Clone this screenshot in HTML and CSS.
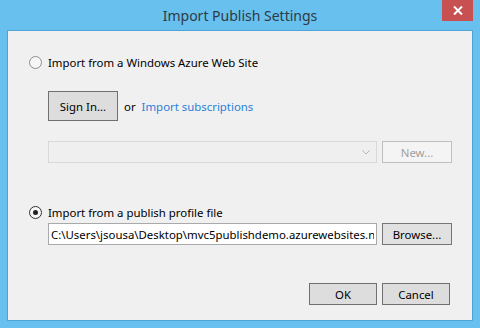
FILE: index.html
```html
<!DOCTYPE html>
<html lang="en">
<head>
  <meta charset="UTF-8">
  <title>Import Publish Settings</title>
  <link rel="stylesheet" href="styles.css">
</head>
<body>
  <div class="window">
    <div class="titlebar">
      <span></span>
      <h1 class="title">Import Publish Settings</h1>
      <button class="close-btn" aria-label="Close">
        <svg width="10" height="9" viewBox="0 0 10 9">
          <path d="M1 0.5 L9 8.5 M9 0.5 L1 8.5" stroke="#fff" stroke-width="2"/>
        </svg>
      </button>
    </div>

    <div class="client">
      <label class="option">
        <span class="radio"></span>
        <span>Import from a Windows Azure Web Site</span>
      </label>

      <div class="indent signin-row">
        <button class="btn btn-signin">Sign In...</button>
        <span class="or">or</span>
        <a href="#" class="link">Import subscriptions</a>
      </div>

      <div class="indent field-row select-row">
        <div class="combo disabled">
          <svg class="chevron" width="8" height="5" viewBox="0 0 8 5">
            <path d="M0.5 0.5 L4 4 L7.5 0.5" fill="none" stroke="#b5b5b5" stroke-width="1"/>
          </svg>
        </div>
        <button class="btn btn-disabled">New...</button>
      </div>

      <label class="option option-file">
        <span class="radio checked"></span>
        <span>Import from a publish profile file</span>
      </label>

      <div class="indent field-row file-row">
        <input class="textbox" type="text" value="C:\Users\jsousa\Desktop\mvc5publishdemo.azurewebsites.net.PublishSettings">
        <button class="btn btn-light">Browse...</button>
      </div>

      <div class="footer">
        <button class="btn btn-dialog">OK</button>
        <button class="btn btn-dialog">Cancel</button>
      </div>
    </div>
  </div>
</body>
</html>
```

FILE: styles.css
```css
/* Global */
body {
  margin: 0;
  font-family: "Noto Sans", "Open Sans", sans-serif;
  font-size: 11.4px;
  color: #000;
}

.window {
  width: 480px;
  height: 328px;
  background-color: #68c0ef;
  display: flex;
  flex-direction: column;
}

/* Title bar */
.titlebar {
  height: 30px;
  display: grid;
  grid-template-columns: 1fr auto 1fr;
  align-items: start;
}

.title {
  margin: 0;
  font-size: 14px;
  font-weight: normal;
  color: #2f3b44;
  line-height: 31px;
}

.close-btn {
  justify-self: end;
  margin-right: 7px;
  width: 31px;
  height: 21px;
  border: none;
  padding: 0;
  background-color: #c75050;
  display: flex;
  align-items: center;
  justify-content: center;
}

/* Client area */
.client {
  flex: 1;
  margin: 0 7px 7px;
  border: 1px solid #4fa3d6;
  background-color: #f0f0f0;
  padding: 24px 20px 0 21px;
  display: flex;
  flex-direction: column;
}

.option {
  display: flex;
  align-items: center;
  gap: 6px;
  height: 14px;
  white-space: nowrap;
}

.radio {
  width: 11px;
  height: 11px;
  border: 1px solid #8d8d8d;
  border-radius: 50%;
  background-color: #f6f6f6;
  display: flex;
  align-items: center;
  justify-content: center;
}

.radio.checked {
  border-color: #333;
}

.radio.checked::after {
  content: "";
  width: 5px;
  height: 5px;
  border-radius: 50%;
  background-color: #222;
}

.indent {
  margin-left: 19px;
}

.signin-row {
  margin-top: 22px;
  display: flex;
  align-items: center;
  gap: 6px;
}

.or {
  margin-right: 0;
}

.link {
  color: #2d7ed6;
  text-decoration: none;
}

.field-row {
  display: flex;
  align-items: center;
  gap: 5px;
}

.select-row {
  margin-top: 20px;
}

.combo {
  width: 327px;
  height: 20px;
  border: 1px solid #d9d9d9;
  background-color: #efefef;
  display: flex;
  align-items: center;
  justify-content: flex-end;
}

.chevron {
  margin-right: 6px;
}

.option-file {
  margin-top: 42px;
}

.file-row {
  margin-top: 4px;
}

.textbox {
  box-sizing: border-box;
  width: 329px;
  height: 22px;
  border: 1px solid #a9a9a9;
  padding: 0 2px;
  margin: 0;
  font-family: inherit;
  font-size: 11.4px;
  color: #000;
  background-color: #fff;
  outline: none;
}

/* Buttons */
.btn {
  box-sizing: border-box;
  margin: 0;
  padding: 0;
  font-family: inherit;
  font-size: 11.4px;
  color: #000;
  width: 70px;
  height: 22px;
  border: 1px solid #707070;
  background-color: #dddddd;
}

.btn-signin {
  height: 30px;
}

.btn-disabled {
  color: #a0a0a0;
  border-color: #bfbfbf;
  background-color: #f4f4f4;
}

.btn-light {
  border-color: #767676;
  background-color: #e1e1e1;
}

.footer {
  margin-top: 38px;
  padding-right: 2px;
  display: flex;
  justify-content: flex-end;
  gap: 5px;
}

.btn-dialog {
  width: 68px;
}
```
